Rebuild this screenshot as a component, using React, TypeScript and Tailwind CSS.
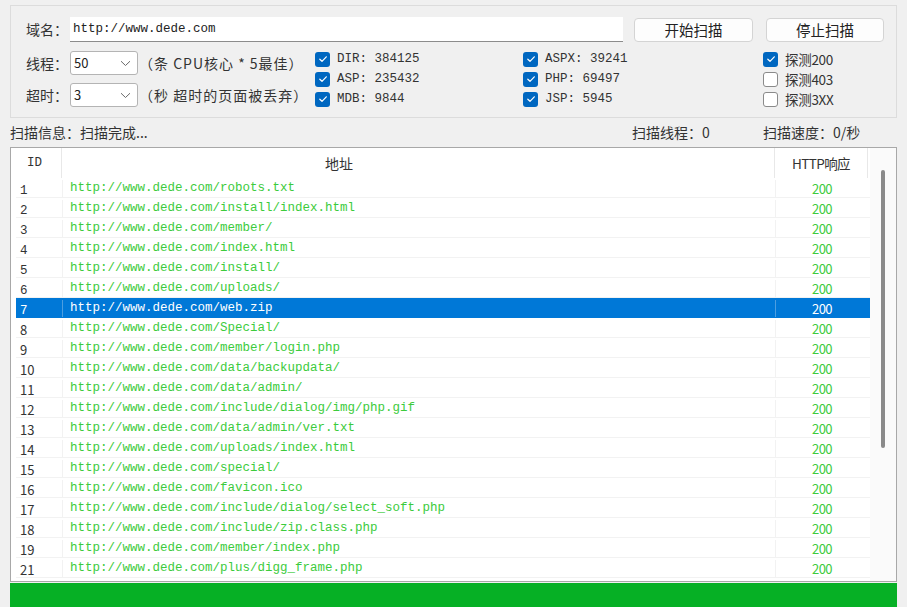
import React from 'react';

const CJK = "font-['Noto_Sans_CJK_SC','Noto_Sans',sans-serif]";
const MONO = "font-['Liberation_Mono','Noto_Sans_CJK_SC',monospace]";

const rows: { id: number; path: string }[] = [
  { id: 1, path: 'robots.txt' },
  { id: 2, path: 'install/index.html' },
  { id: 3, path: 'member/' },
  { id: 4, path: 'index.html' },
  { id: 5, path: 'install/' },
  { id: 6, path: 'uploads/' },
  { id: 7, path: 'web.zip' },
  { id: 8, path: 'Special/' },
  { id: 9, path: 'member/login.php' },
  { id: 10, path: 'data/backupdata/' },
  { id: 11, path: 'data/admin/' },
  { id: 12, path: 'include/dialog/img/php.gif' },
  { id: 13, path: 'data/admin/ver.txt' },
  { id: 14, path: 'uploads/index.html' },
  { id: 15, path: 'special/' },
  { id: 16, path: 'favicon.ico' },
  { id: 17, path: 'include/dialog/select_soft.php' },
  { id: 18, path: 'include/zip.class.php' },
  { id: 19, path: 'member/index.php' },
  { id: 21, path: 'plus/digg_frame.php' },
];

const Check: React.FC<{ checked: boolean }> = ({ checked }) =>
  checked ? (
    <div className="w-[15px] h-[15px] rounded-[3px] bg-[#0067c0] flex items-center justify-center">
      <svg width="10" height="10" viewBox="0 0 10 10">
        <path d="M1.8 5.2 L4 7.3 L8.3 2.8" stroke="white" strokeWidth="1.2" fill="none" strokeLinecap="round" strokeLinejoin="round" />
      </svg>
    </div>
  ) : (
    <div className="w-[15px] h-[15px] rounded-[3px] bg-white border border-[#8a8a8a]" />
  );

const CheckItem: React.FC<{ checked: boolean; label: string; mono?: boolean }> = ({ checked, label, mono }) => (
  <div className="h-[20px] flex items-center">
    <Check checked={checked} />
    <span className={`ml-[7px] text-[#333] whitespace-nowrap ${mono ? `${MONO} text-[12.5px]` : `${CJK} text-[13.5px] tracking-[-0.3px]`}`}>
      {label}
    </span>
  </div>
);

const Select: React.FC<{ value: string }> = ({ value }) => (
  <div className="w-[68px] h-[24px] bg-white border border-[#b4b4b4] rounded-[3px] flex items-center justify-between pl-[3px] pr-[6px]">
    <span className={`${CJK} text-[13px] text-[#222]`}>{value}</span>
    <svg width="11" height="7" viewBox="0 0 11 7">
      <path d="M1 1.2 L5.5 5.5 L10 1.2" stroke="#6a6a6a" strokeWidth="1" fill="none" />
    </svg>
  </div>
);

const Button: React.FC<{ label: string; w: string }> = ({ label, w }) => (
  <div className={`${w} h-[24px] bg-[#fdfdfd] border border-[#d4d4d4] rounded-[4px] flex items-center justify-center ${CJK} text-[14.5px] text-[#222]`}>
    {label}
  </div>
);

export default function App() {
  return (
    <div className="w-[907px] h-[607px] overflow-hidden bg-[#f0f0f0] px-[10px] pt-[5px] flex flex-col">
      {/* settings group */}
      <div className="h-[113px] border border-[#dcdcdc] flex flex-col pl-[15px] pt-[11px]">
        <div className="flex items-center">
          <span className={`w-[44px] ${CJK} text-[14px] text-[#333]`}>域名：</span>
          <div className="w-[553px] h-[25px] bg-white border-b border-[#8c8c8c] flex items-center pl-[3px]">
            <span className={`${MONO} text-[12.5px] text-[#222]`}>http://www.dede.com</span>
          </div>
          <div className="ml-[11px]">
            <Button label="开始扫描" w="w-[119px]" />
          </div>
          <div className="ml-[13px]">
            <Button label="停止扫描" w="w-[118px]" />
          </div>
        </div>

        <div className="flex mt-[7px]">
          <div className="w-[289px] pt-[2px] flex flex-col gap-[8px]">
            <div className="h-[24px] flex items-center">
              <span className={`w-[44px] ${CJK} text-[14px] text-[#333]`}>线程：</span>
              <Select value="50" />
              <span className={`ml-[1px] ${CJK} text-[14px] text-[#333] whitespace-nowrap tracking-[1px]`}>（条 CPU核心 * 5最佳）</span>
            </div>
            <div className="h-[24px] flex items-center">
              <span className={`w-[44px] ${CJK} text-[14px] text-[#333]`}>超时：</span>
              <Select value="3" />
              <span className={`ml-[1px] ${CJK} text-[14px] text-[#333] whitespace-nowrap tracking-[1px]`}>（秒 超时的页面被丢弃）</span>
            </div>
          </div>
          <div className="w-[208px] flex flex-col">
            <CheckItem checked label="DIR: 384125" mono />
            <CheckItem checked label="ASP: 235432" mono />
            <CheckItem checked label="MDB: 9844" mono />
          </div>
          <div className="w-[240px] flex flex-col">
            <CheckItem checked label="ASPX: 39241" mono />
            <CheckItem checked label="PHP: 69497" mono />
            <CheckItem checked label="JSP: 5945" mono />
          </div>
          <div className="flex flex-col">
            <CheckItem checked label="探测200" />
            <CheckItem checked={false} label="探测403" />
            <CheckItem checked={false} label="探测3XX" />
          </div>
        </div>
      </div>

      {/* status */}
      <div className={`h-[29px] flex items-center ${CJK} text-[14px] text-[#333]`}>
        <span className="w-[622px]">扫描信息：扫描完成...</span>
        <span className="w-[131px]">扫描线程：0</span>
        <span>扫描速度：0/秒</span>
      </div>

      {/* results table */}
      <div className="h-[435px] border border-[#a8a8a8] bg-white flex">
        <div className="w-[859px] pl-[1px] flex flex-col">
          <div className="h-[30px] flex items-center text-[#333]">
            <div className="w-[50px] h-full flex items-center pl-[15px] border-r border-[#e8e8e8]">
              <span className={`${MONO} text-[12.5px]`}>ID</span>
            </div>
            <div className="w-[713px] h-full flex items-center pl-[263px] border-r border-[#e8e8e8]">
              <span className={`${CJK} text-[14px]`}>地址</span>
            </div>
            <div className="w-[93px] h-full flex items-center justify-center border-r border-[#e8e8e8]">
              <span className={`${CJK} text-[13.5px] tracking-[-0.6px]`}>HTTP响应</span>
            </div>
          </div>
          <div className="pl-[4px] flex flex-col">
            {rows.map((r) => {
              const sel = r.id === 7;
              return (
                <div
                  key={r.id}
                  className={`h-[20px] pt-[2px] flex items-center border-b ${sel ? 'bg-[#0078d7] border-[#0078d7]' : 'border-[#f2f2f2]'}`}
                >
                  <div className={`w-[46px] pl-[4px] ${sel ? 'text-white' : 'text-[#333]'}`}>
                    <span className={r.id <= 7 ? `${MONO} text-[12.5px]` : `${CJK} text-[13px]`}>{r.id}</span>
                  </div>
                  <div className={`w-[713px] h-full flex items-center pl-[7px] border-l ${sel ? 'border-[#4d9ee0] text-white' : 'border-[#f2f2f2] text-[#3ccb3c]'}`}>
                    <span className={`${MONO} text-[12.5px] whitespace-nowrap`}>http://www.dede.com/{r.path}</span>
                  </div>
                  <div className={`w-[93px] h-full flex items-center justify-center border-l ${sel ? 'border-[#4d9ee0] text-white' : 'border-[#f2f2f2] text-[#3ccb3c]'}`}>
                    <span className={`${CJK} text-[13px] tracking-[-0.5px]`}>200</span>
                  </div>
                </div>
              );
            })}
          </div>
        </div>
        <div className="flex-1 bg-[#fafafa] pt-[22px] pl-[11px]">
          <div className="w-[4px] h-[278px] rounded-full bg-[#8a8a8a]" />
        </div>
      </div>

      {/* progress */}
      <div className="mt-[1px] h-[24px] bg-[#06b025]" />
    </div>
  );
}
